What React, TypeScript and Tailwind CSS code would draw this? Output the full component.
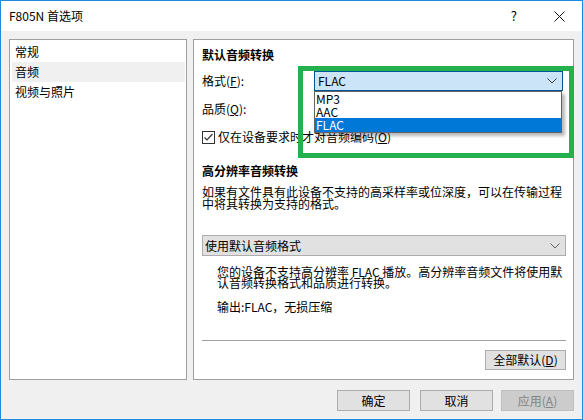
import React from "react";

const Chevron = ({ color }: { color: string }) => (
  <svg width="10" height="6" viewBox="0 0 10 6" fill="none">
    <path d="M0.5 0.5 L5 5 L9.5 0.5" stroke={color} strokeWidth="1" />
  </svg>
);

const Mn = ({ children }: { children: React.ReactNode }) => (
  <span className="underline underline-offset-[1px]">{children}</span>
);

const Button = ({
  children,
  disabled,
  className = "",
}: {
  children: React.ReactNode;
  disabled?: boolean;
  className?: string;
}) => (
  <div
    className={`h-[21px] w-[73px] flex items-center justify-center border text-[12px] leading-[14px] ${
      disabled
        ? "bg-[#cccccc] border-[#bfbfbf] text-[#838383]"
        : "bg-[#e1e1e1] border-[#adadad] text-black"
    } ${className}`}
  >
    {children}
  </div>
);

export default function App() {
  return (
    <div className="relative w-[583px] h-[420px] border border-[#1c8ae0] flex flex-col bg-white font-['Noto_Sans_CJK_SC',sans-serif] text-black text-[12px]">
      {/* title bar */}
      <div className="h-[30px] flex items-center pl-[8px] pr-[17px] bg-white">
        <span className="flex-1 text-[12px] leading-[14px]">F805N 首选项</span>
        <span className="text-[13px] leading-[14px] mr-[37px]">?</span>
        <svg width="11" height="11" viewBox="0 0 11 11">
          <path d="M0.5 0.5 L10.5 10.5 M10.5 0.5 L0.5 10.5" stroke="#111" strokeWidth="1" />
        </svg>
      </div>

      {/* body */}
      <div className="flex-1 bg-[#f0f0f0] px-[8px] pt-[8px] pb-[8px] flex flex-col">
        <div className="h-[341px] flex gap-[6px]">
          {/* left list */}
          <div className="w-[178px] border border-[#a0a0a0] bg-white pt-[2px] flex flex-col">
            <div className="h-[20px] leading-[20px] pl-[5px]">常规</div>
            <div className="h-[20px] leading-[20px] ml-[2px] mr-[1px] pl-[3px] bg-[#f0f0f0]">音频</div>
            <div className="h-[20px] leading-[20px] pl-[5px]">视频与照片</div>
          </div>

          {/* right panel */}
          <div className="flex-1 border border-[#a0a0a0] bg-white pl-[8px] pr-[7px] flex flex-col">
            <div className="mt-[7px] h-[16px] leading-[16px] font-bold">默认音频转换</div>

            <div className="mt-[8px] h-[20px] flex items-center">
              <div className="w-[112px]">
                格式(<Mn>F</Mn>):
              </div>
              <div className="relative w-[249px] h-[20px] bg-[#cce4f7] border border-[#005499] flex items-center pl-[3px] pr-[5px]">
                <span className="flex-1 leading-[14px]">FLAC</span>
                <Chevron color="#404040" />
                <div className="absolute left-[-1px] top-[19px] w-[248px] bg-white border border-[#646464] shadow-[3px_3px_3px_rgba(0,0,0,0.28)] flex flex-col">
                  <div className="h-[13px] leading-[13px] pl-[1px]">MP3</div>
                  <div className="h-[13px] leading-[13px] pl-[1px]">AAC</div>
                  <div className="h-[14px] leading-[14px] pl-[1px] bg-[#0078d7] text-white">FLAC</div>
                </div>
              </div>
            </div>

            <div className="mt-[8px] h-[20px] flex items-center">
              品质(<Mn>Q</Mn>):
            </div>

            <div className="mt-[10px] h-[16px] flex items-center">
              <div className="w-[13px] h-[13px] border border-[#333333] bg-white flex items-center justify-center">
                <svg width="11" height="11" viewBox="0 0 11 11">
                  <path d="M1.5 5.5 L4 8 L9.5 2" stroke="#333" strokeWidth="1.2" fill="none" />
                </svg>
              </div>
              <span className="ml-[3px] leading-[14px]">
                仅在设备要求时才对音频编码(<Mn>O</Mn>)
              </span>
            </div>

            <div className="mt-[18px] h-[16px] leading-[16px] font-bold">高分辨率音频转换</div>

            <div className="mt-[7px] leading-[12px]">
              如果有文件具有此设备不支持的高采样率或位深度，可以在传输过程
              <br />
              中将其转换为支持的格式。
            </div>

            <div className="mt-[25px] h-[21px] mr-[0px] bg-[#e1e1e1] border border-[#adadad] flex items-center pl-[2px] pr-[5px]">
              <span className="flex-1 leading-[14px]">使用默认音频格式</span>
              <Chevron color="#606060" />
            </div>

            <div className="mt-[10px] pl-[15px] leading-[11px]">
              您的设备不支持高分辨率 FLAC 播放。高分辨率音频文件将使用默
              <br />
              认音频转换格式和品质进行转换。
            </div>

            <div className="mt-[13px] pl-[15px] h-[12px] leading-[12px]">输出:FLAC，无损压缩</div>

            <div className="mt-[27px] h-px bg-[#a0a0a0]" />

            <div className="mt-[9px] flex justify-end">
              <div className="h-[20px] w-[81px] flex items-center justify-center border bg-[#e1e1e1] border-[#adadad] leading-[14px]">
                全部默认(<Mn>D</Mn>)
              </div>
            </div>
          </div>
        </div>

        {/* bottom buttons */}
        <div className="mt-[10px] flex justify-end">
          <Button>确定</Button>
          <Button className="ml-[10px]">取消</Button>
          <Button disabled className="ml-[8px]">
            应用(<Mn>A</Mn>)
          </Button>
        </div>
      </div>

      {/* annotation highlight */}
      <div className="absolute left-[297px] top-[65px] w-[276px] h-[92px] border-[5px] border-[#22b14c] pointer-events-none" />
    </div>
  );
}
